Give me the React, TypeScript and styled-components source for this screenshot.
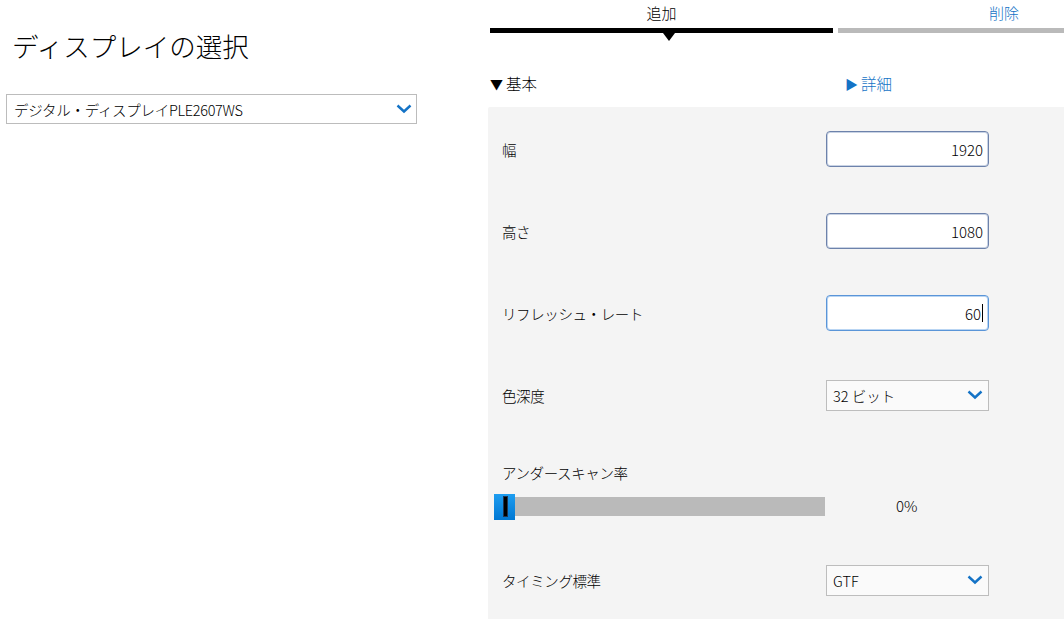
import styled, { createGlobalStyle } from "styled-components";

const GlobalStyle = createGlobalStyle`
  html, body {
    margin: 0;
    padding: 0;
    background: #ffffff;
    overflow: hidden;
  }
  body {
    font-family: "Noto Sans CJK JP", "Noto Sans", sans-serif;
    font-weight: 300;
    color: #000000;
  }
`;

const Page = styled.div`
  display: flex;
  width: 1064px;
  height: 619px;
  overflow: hidden;
`;

const LeftColumn = styled.div`
  width: 482px;
  padding-left: 6px;
  flex-shrink: 0;
`;

const Title = styled.h1`
  margin: 0;
  padding: 26px 0 0 6px;
  height: 40px;
  font-size: 26.5px;
  font-weight: 300;
  line-height: 40px;
`;

const DisplaySelect = styled.div`
  margin-top: 28px;
  height: 28px;
  width: 398px;
  border: 1px solid #bcbcbc;
  display: flex;
  align-items: center;
  justify-content: space-between;
  padding: 0 4px 0 7px;
  box-sizing: content-box;
  font-size: 14.5px;
  letter-spacing: -0.3px;
`;

const RightColumn = styled.div`
  flex: 1;
  min-width: 0;
  display: flex;
  flex-direction: column;
`;

const TabBar = styled.div`
  display: flex;
  flex-shrink: 0;
  gap: 5px;
  padding-left: 2px;
  height: 42px;
  overflow: hidden;
`;

const Tab = styled.div<{ $active?: boolean; $width: number }>`
  position: relative;
  flex-shrink: 0;
  width: ${(p) => p.$width}px;
  height: 33px;
  box-sizing: border-box;
  border-bottom: 5px solid ${(p) => (p.$active ? "#000000" : "#bababa")};
  text-align: center;
  font-size: 15px;
  line-height: 26px;
  color: ${(p) => (p.$active ? "#000000" : "#1473c6")};
`;

const TabPointer = styled.span`
  position: absolute;
  left: 173px;
  top: 33px;
  width: 0;
  height: 0;
  border-left: 6px solid transparent;
  border-right: 6px solid transparent;
  border-top: 8px solid #000000;
`;

const SectionHeader = styled.div`
  display: flex;
  flex-shrink: 0;
  height: 65px;
  box-sizing: border-box;
  padding: 17px 0 0 2px;
  align-items: center;
  font-size: 15.5px;
`;

const SectionToggle = styled.div<{ $open?: boolean }>`
  width: ${(p) => (p.$open ? "355px" : "auto")};
  color: ${(p) => (p.$open ? "#000000" : "#1473c6")};
  display: flex;
  align-items: center;
  gap: 3px;
`;

const Arrow = styled.span`
  font-size: 13px;
`;

const Panel = styled.div`
  flex: 1 0 auto;
  background: #f4f4f4;
  border-top-left-radius: 2px;
  padding-top: 1px;
`;

const Row = styled.div`
  height: 82px;
  display: flex;
  align-items: center;
`;

const Label = styled.div`
  width: 324px;
  padding-left: 14px;
  font-size: 14.5px;
  letter-spacing: -0.4px;
`;

const NumberInput = styled.div<{ $focused?: boolean }>`
  width: 163px;
  height: 36px;
  box-sizing: border-box;
  border: 1px solid ${(p) => (p.$focused ? "#5a95d8" : "#6d82ab")};
  box-shadow: inset 0 0 0 1px ${(p) => (p.$focused ? "#b9d5f3" : "#c9d3e4")};
  border-radius: 4px;
  background: #ffffff;
  display: flex;
  align-items: center;
  justify-content: flex-end;
  padding-right: 5px;
  font-size: 15px;
`;

const Caret = styled.span`
  display: inline-block;
  width: 1px;
  height: 18px;
  background: #000000;
  margin-left: 1px;
`;

const DropDown = styled.div`
  width: 163px;
  height: 31px;
  box-sizing: border-box;
  border: 1px solid #bdbdbd;
  background: #fafafa;
  display: flex;
  align-items: center;
  justify-content: space-between;
  padding: 0 5px 0 6px;
  font-size: 14.5px;
`;

const UnderscanBlock = styled.div`
  padding: 27px 0 23px;
`;

const UnderscanLabel = styled(Label)`
  line-height: 20px;
  margin-bottom: 13px;
`;

const SliderRow = styled.div`
  display: flex;
  align-items: center;
  height: 20px;
  padding-left: 7px;
`;

const Track = styled.div`
  position: relative;
  width: 330px;
  height: 19px;
  background: #bababa;
`;

const Thumb = styled.div`
  position: absolute;
  left: -1px;
  top: -3px;
  width: 21px;
  height: 26px;
  background: linear-gradient(#1e9df0, #0077d3);
  display: flex;
  justify-content: center;
  align-items: center;
`;

const ThumbGrip = styled.div`
  width: 5px;
  height: 21px;
  margin-left: 1px;
  background: #000000;
  border: 1px solid #1f3552;
  box-sizing: border-box;
`;

const Percent = styled.div`
  margin-left: 71px;
  font-size: 15px;
  margin-top: -2px;
`;

const Chevron = () => (
  <svg width="16" height="10" viewBox="0 0 16 10">
    <polyline
      points="1.5,1.5 8,7.5 14.5,1.5"
      fill="none"
      stroke="#1473c6"
      strokeWidth="2.4"
    />
  </svg>
);

export default function App() {
  return (
    <>
      <GlobalStyle />
      <Page>
        <LeftColumn>
          <Title>ディスプレイの選択</Title>
          <DisplaySelect>
            <span>デジタル・ディスプレイPLE2607WS</span>
            <Chevron />
          </DisplaySelect>
        </LeftColumn>

        <RightColumn>
          <TabBar>
            <Tab $active $width={343}>
              追加
              <TabPointer />
            </Tab>
            <Tab $width={332}>削除</Tab>
          </TabBar>

          <SectionHeader>
            <SectionToggle $open>
              <Arrow>▼</Arrow>基本
            </SectionToggle>
            <SectionToggle>
              <Arrow>▶</Arrow>詳細
            </SectionToggle>
          </SectionHeader>

          <Panel>
            <Row>
              <Label>幅</Label>
              <NumberInput>1920</NumberInput>
            </Row>
            <Row>
              <Label>高さ</Label>
              <NumberInput>1080</NumberInput>
            </Row>
            <Row>
              <Label>リフレッシュ・レート</Label>
              <NumberInput $focused>
                60
                <Caret />
              </NumberInput>
            </Row>
            <Row>
              <Label>色深度</Label>
              <DropDown>
                <span>32 ビット</span>
                <Chevron />
              </DropDown>
            </Row>
            <UnderscanBlock>
              <UnderscanLabel>アンダースキャン率</UnderscanLabel>
              <SliderRow>
                <Track>
                  <Thumb>
                    <ThumbGrip />
                  </Thumb>
                </Track>
                <Percent>0%</Percent>
              </SliderRow>
            </UnderscanBlock>
            <Row>
              <Label>タイミング標準</Label>
              <DropDown>
                <span>GTF</span>
                <Chevron />
              </DropDown>
            </Row>
          </Panel>
        </RightColumn>
      </Page>
    </>
  );
}
